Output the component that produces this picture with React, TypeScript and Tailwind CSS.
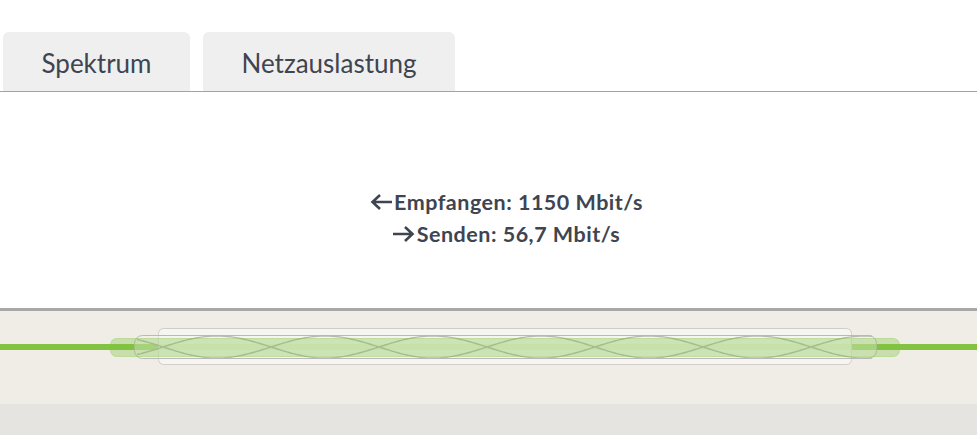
import React from "react";

const FONT = { fontFamily: "Lato, 'Open Sans', sans-serif" };

function wave(phase: number) {
  const pts: string[] = [];
  const x0 = 137;
  const x1 = 874;
  for (let x = x0; x <= x1; x += 3) {
    const y = 36 + phase * 11 * Math.cos(((x - 163) / 108) * Math.PI + Math.PI / 2);
    pts.push(`${x},${y.toFixed(2)}`);
  }
  return pts.join(" ");
}

function Cable() {
  return (
    <svg width="977" height="93" viewBox="0 0 977 93" className="block">
      <rect x="0" y="33" width="977" height="6" fill="#82c341" />
      <rect x="158.5" y="17.5" width="693" height="36" rx="5" fill="#f7f6f3" fillOpacity="0.85" stroke="#cfcecb" />
      <rect x="134.5" y="24.5" width="742" height="23" rx="8" fill="#f4f3ef" fillOpacity="0.5" stroke="#b9b9b7" />
      <polyline points={wave(1)} fill="none" stroke="#b8b8b6" strokeWidth="1.4" />
      <polyline points={wave(-1)} fill="none" stroke="#b8b8b6" strokeWidth="1.4" />
      <rect x="110.5" y="27.5" width="789" height="18" rx="6" fill="#82c341" fillOpacity="0.35" stroke="#82c341" strokeOpacity="0.35" />
    </svg>
  );
}

function Arrow({ dir }: { dir: "left" | "right" }) {
  const d = dir === "left" ? "M2.5 8H22 M10 1L2.5 8L10 15" : "M0 8H19.5 M12 1L19.5 8L12 15";
  return (
    <svg width="22" height="16" viewBox="0 0 22 16" className="mr-[2px] inline-block align-[-1px]">
      <path d={d} fill="none" stroke="currentColor" strokeWidth="2.6" />
    </svg>
  );
}

export default function App() {
  return (
    <div className="flex h-[435px] w-[977px] flex-col bg-white text-[#3e4550]" style={FONT}>
      <div className="flex h-[92px] items-end gap-[13px] border-b border-[#a3a3a3] pl-[3px]">
        <div className="flex h-[59px] w-[187px] items-center justify-center rounded-t-[6px] bg-[#efefef] pt-[3px] text-[26px]">
          Spektrum
        </div>
        <div className="flex h-[59px] w-[252px] items-center justify-center rounded-t-[6px] bg-[#efefef] pt-[3px] text-[26px]">
          Netzauslastung
        </div>
      </div>
      <div className="flex h-[216px] flex-col items-center justify-center pl-[36px] pt-[36px] text-[21.5px] font-bold leading-[32px] tracking-[0.5px]">
        <div className="flex items-center">
          <Arrow dir="left" />
          Empfangen: 1150 Mbit/s
        </div>
        <div className="flex items-center">
          <Arrow dir="right" />
          Senden: 56,7 Mbit/s
        </div>
      </div>
      <div className="h-[96px] border-t-[3px] border-[#a8a8a8] bg-[#f0ede7]">
        <Cable />
      </div>
      <div className="flex-1 bg-[#e5e4e0]" />
    </div>
  );
}
